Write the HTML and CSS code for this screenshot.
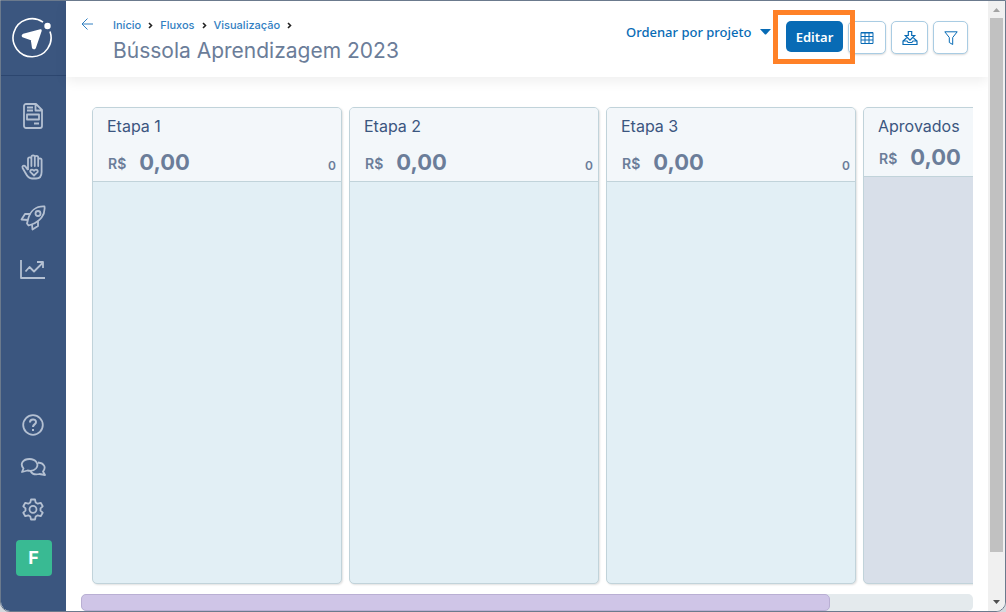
FILE: index.html
```html
<!DOCTYPE html>
<html lang="pt-br">
<head>
<meta charset="UTF-8">
<meta name="viewport" content="width=device-width, initial-scale=1.0">
<link rel="stylesheet" href="styles.css">
<title>Bússola Aprendizagem 2023</title>
</head>
<body>

<div class="window">

<!-- sidebar -->
<nav class="sidebar" aria-label="Menu principal">
<a class="logo" href="#" aria-label="Página inicial">
<svg width="40" height="42" viewBox="0 0 40 42" fill="none" stroke="#fff" stroke-width="1.6">
<path d="M31 5.200A19 19 0 1 0 38 14.500"/>
<circle cx="35.500" cy="9" r="3.200" fill="#fff" stroke="none"/>
<path d="M28.500 13.500 11.500 18c-.8.400-.8 1 0 1.400l8.500 2.800 1.200 8.300c.3.800 1 .8 1.500 0z" fill="#fff" stroke="#fff" stroke-width="2.500" stroke-linejoin="round"/>
</svg>
</a>

<div class="menu">
<a href="#" aria-label="Projetos">
<svg width="26" height="26" viewBox="0 0 26 26">
<path d="M4 3a2 2 0 0 1 2-2h10l6 6v16a2 2 0 0 1-2 2H6a2 2 0 0 1-2-2zM15.500 1v6.500H22M7 4.500h6M7 7.500h6M7 11.500h12v5H7zM14 20.500h5"/>
</svg>
</a>
<a href="#" aria-label="Voluntários">
<svg width="26" height="26" viewBox="0 0 26 26">
<path d="M8 16V5a1.700 1.700 0 0 1 3.400 0v7V3a1.700 1.700 0 0 1 3.400 0v9V3.500a1.700 1.700 0 0 1 3.400 0V12V6a1.700 1.700 0 0 1 3.400 0v12c0 4-2 6.500-5.600 6.500h-4C9 24.500 7 22 5.500 19L2.600 14c-.8-2 1.400-3.300 2.700-1.600L8 16"/>
<path d="M14 21.500l-3.500-3.300c-1.200-2.200 1.800-3.700 3.500-1.400 1.700-2.300 4.700-.8 3.500 1.400z"/>
</svg>
</a>
<a href="#" aria-label="Lançamentos">
<svg width="26" height="26" viewBox="0 0 26 26">
<path d="M8 14.500C10 6 16 1 24.500 1.500 25.500 10 20 16.500 11.500 19.500L8.500 20.500 7 18.500z"/>
<circle cx="18" cy="8.500" r="2.500"/>
<path d="M10.500 9H5L1.500 14.500 8 15M18 16v5l-5.500 3.500-.5-5"/>
</svg>
</a>
<a href="#" aria-label="Indicadores">
<svg width="26" height="26" viewBox="0 0 26 26">
<path d="M1 4v18h24M5.500 15.500l4-4.500 4.500 4.500 8.500-8.500M17 6h6v6"/>
</svg>
</a>
</div>

<div class="menu menu-bottom">
<a href="#" aria-label="Ajuda">
<svg width="26" height="26" viewBox="0 0 26 26">
<circle cx="13" cy="13" r="9.800"/>
<path d="M10 10.500c0-4 6-4 6-.5 0 2.500-3 2.300-3 5M13 17v2" stroke-width="2"/>
</svg>
</a>
<a href="#" aria-label="Mensagens">
<svg width="26" height="26" viewBox="0 0 26 26">
<path d="M3.500 14.500C-.5 10 3 5 9.500 5s10 5.500 6.500 9.500c-2.300 2.500-5.500 2.700-8.500 2L2 18zM18 8.500c6 .5 8.500 5 5 9L25 21l-5.500-1c-4 1-7.500 0-9-3"/>
</svg>
</a>
<a href="#" aria-label="Configurações">
<svg width="26" height="26" viewBox="0 0 26 26">
<path d="M11 3.500h4l.7 3 2 1.200 3-.9 2 3.500-2.200 2v2.400l2.200 2-2 3.500-3-.9-2 1.200-.7 3h-4l-.7-3-2-1.200-3 .9-2-3.500 2.200-2v-2.400l-2.200-2 2-3.500 3 .9 2-1.200z"/>
<circle cx="13" cy="13.300" r="3.500"/>
</svg>
</a>
</div>

<a class="avatar" href="#">F</a>
</nav>

<!-- page -->
<div class="page">

<header class="topbar">
<a class="back" href="#" aria-label="Voltar">
<svg width="12" height="12" viewBox="0 0 12 12"><path d="M12 6H1M6.500.5 1 6l5.500 5.500"/></svg>
</a>
<div class="heading">
<nav class="crumbs" aria-label="Navegação">
<a href="#">Início</a>
<svg width="5" height="7" viewBox="0 0 5 7"><path d="M1 1l2.500 2.500L1 6"/></svg>
<a href="#">Fluxos</a>
<svg width="5" height="7" viewBox="0 0 5 7"><path d="M1 1l2.500 2.500L1 6"/></svg>
<a href="#">Visualização</a>
<svg width="5" height="7" viewBox="0 0 5 7"><path d="M1 1l2.500 2.500L1 6"/></svg>
</nav>
<h1 class="title">Bússola Aprendizagem 2023</h1>
</div>

<div class="actions">
<div class="order">
<select class="order-select" aria-label="Ordenação">
<option>Ordenar por projeto</option>
</select>
<svg width="11" height="6" viewBox="0 0 11 6"><path d="M0 0h11L6 5.500H5z"/></svg>
</div>
<div class="highlight"><button class="btn-edit" type="button">Editar</button></div>
<button class="btn-icon btn-table" type="button" aria-label="Tabela">
<svg width="14" height="14" viewBox="0 0 14 14"><path d="M1 1.500h12v11H1zM1 5.500h12M1 9h12M5 1v12M9 1v12"/><path d="M1 1.800h12" stroke-width="1.500"/></svg>
</button>
<button class="btn-icon btn-export" type="button" aria-label="Exportar">
<svg width="16" height="16" viewBox="0 0 16 16" stroke-width="1.200"><path d="M6.300 1.500h3.400v4h3L8 10.200 3.300 5.500h3zM4.500 8 1 11v3.500h14V11l-3.500-3M1 11h4l1.200 1.500h3.600L11 11h4"/></svg>
</button>
<button class="btn-icon" type="button" aria-label="Filtrar">
<svg width="14" height="14" viewBox="0 0 14 14"><path d="M.8.8h12.400L8.700 6.500v7L5.300 11.500v-5z"/></svg>
</button>
</div>
</header>

<main class="board">
<section class="column">
<div class="column-head">
<h2>Etapa 1</h2>
<div class="amount"><span class="currency">R$</span><b>0,00</b><span class="count">0</span></div>
</div>
</section>
<section class="column">
<div class="column-head">
<h2>Etapa 2</h2>
<div class="amount"><span class="currency">R$</span><b>0,00</b><span class="count">0</span></div>
</div>
</section>
<section class="column">
<div class="column-head">
<h2>Etapa 3</h2>
<div class="amount"><span class="currency">R$</span><b>0,00</b><span class="count">0</span></div>
</div>
</section>
<section class="column approved">
<div class="column-head">
<h2>Aprovados</h2>
<div class="amount"><span class="currency">R$</span><b>0,00</b></div>
</div>
</section>
</main>

<div class="hscroll"><div class="hscroll-thumb"></div></div>

</div>

<!-- vertical scrollbar -->
<div class="vscroll">
<svg width="7" height="4" viewBox="0 0 7 4" fill="#a3a3a3"><path d="M0 4 3.500 0 7 4z"/></svg>
<div class="vscroll-track"><div class="vscroll-thumb"></div></div>
<svg width="7" height="4" viewBox="0 0 7 4" fill="#505050"><path d="M0 0h7L3.500 4z"/></svg>
</div>

</div>

</body>
</html>
```

FILE: styles.css
```css
*, *:before, *:after{
margin:0;
padding:0;
box-sizing:border-box;
}

:root{
--sidebar:#3b567f;
--icon:#b4c0d2;
--blue:#086bb5;
--link:#3280c2;
--text:#6b7d99;
--border:#c1d3da;
}

body{
background:#d5d9de;
font-family:Inter, "Liberation Sans", sans-serif;
color:var(--text);
}

a{
text-decoration:none;
}

button, select{
font-family:"Noto Sans", sans-serif;
cursor:pointer;
}

svg{
display:block;
flex:none;
}

.window{
display:flex;
height:100vh;
background:#fff;
border:1px solid #6b7a8d;
border-radius:0 0 10px 10px;
overflow:hidden;
}

/* sidebar */
.sidebar{
display:flex;
flex:none;
flex-direction:column;
align-items:center;
width:65px;
padding-bottom:35px;
background:var(--sidebar);
}

.logo{
display:flex;
align-items:center;
justify-content:center;
width:100%;
height:75px;
padding-right:4px;
border-bottom:1px solid #2c466f;
}

.menu{
display:flex;
flex-direction:column;
gap:25px;
padding:27px 2px 0 0;
}

.menu-bottom{
gap:16px;
margin-top:auto;
padding:0 2px 18px 0;
}

.menu svg{
fill:none;
stroke:var(--icon);
stroke-width:1.8;
stroke-linejoin:round;
}

.avatar{
width:36px;
height:36px;
border-radius:4px;
background:#39ba93;
color:#fff;
font-size:18px;
font-weight:700;
line-height:36px;
text-align:center;
}

/* page */
.page{
display:flex;
flex:1;
flex-direction:column;
min-width:0;
}

.topbar{
display:flex;
flex:none;
height:76px;
padding:9px 20px 0 15px;
box-shadow:0 4px 12px rgba(0,0,0,.07);
}

.back{
padding-top:8px;
}

.back svg{
fill:none;
stroke:var(--link);
}

.heading{
padding:7px 0 0 20px;
}

.crumbs{
display:flex;
align-items:center;
gap:7px;
height:16px;
font-size:11px;
font-weight:500;
}

.crumbs a{
color:var(--link);
}

.crumbs svg{
fill:none;
stroke:#222;
stroke-width:1.6;
}

.title{
font-size:21px;
font-weight:400;
line-height:36px;
white-space:nowrap;
}

.actions{
display:flex;
align-items:flex-start;
margin-left:auto;
}

.order{
display:flex;
align-items:center;
gap:8px;
height:44px;
margin-right:2px;
color:var(--blue);
}

.order svg{
fill:var(--blue);
}

.order-select{
appearance:none;
border:0;
background:none;
color:var(--blue);
font-size:13px;
font-weight:500;
}

.highlight{
z-index:1;
padding:6px 7px 7px 8px;
border:5px solid #ff8127;
}

.btn-edit{
display:block;
width:57px;
height:31px;
border:0;
border-radius:5px;
background:var(--blue);
color:#fff;
font-size:13px;
font-weight:600;
}

.btn-icon{
display:flex;
align-items:center;
justify-content:center;
width:35px;
height:33px;
margin:11px 0 0 5px;
border:1px solid #a9cce3;
border-radius:5px;
background:#fff;
box-shadow:0 1px 2px rgba(0,0,0,.15);
}

.btn-table{
width:38px;
margin-left:-7px;
}

.btn-export{
width:37px;
}

.btn-icon svg{
fill:none;
stroke:var(--blue);
}

/* board */
.board{
display:flex;
flex:1;
gap:7px;
margin-right:15px;
padding:30px 0 10px 26px;
overflow:hidden;
}

.column{
flex:0 0 250px;
border:1px solid var(--border);
border-radius:5px;
background:#e2eff5;
box-shadow:1px 1px 2px rgba(0,0,0,.12);
overflow:hidden;
}

.column-head{
padding:7px 5px 3px 14px;
border-bottom:1px solid var(--border);
background:#f3f7fa;
}

.column h2{
color:#3b567f;
font-size:16px;
font-weight:400;
line-height:22px;
}

.amount{
display:flex;
align-items:center;
padding-top:9px;
line-height:32px;
}

.amount b{
margin-left:13px;
font-size:22px;
}

.currency{
padding:4px 0 0 1px;
font-size:14px;
font-weight:600;
line-height:28px;
}

.count{
align-self:flex-end;
margin-left:auto;
font-size:12px;
font-weight:600;
line-height:24px;
}

.approved{
background:#d8dfe9;
}

.approved .amount{
padding-top:4px;
}

/* scrollbars */
.hscroll{
flex:none;
height:17px;
margin:0 15px 0 15px;
border-radius:5px;
background:#e4eaed;
}

.hscroll-thumb{
width:84%;
height:17px;
border:1px solid #b9afd3;
border-radius:5px;
background:#cfc5e7;
}

.vscroll{
display:flex;
flex:none;
flex-direction:column;
align-items:center;
width:17px;
padding:7px 0;
background:#f0f0f0;
}

.vscroll-track{
flex:1;
width:13px;
padding:6px 0 14px;
}

.vscroll-thumb{
height:94%;
background:#c1c1c1;
}
```
